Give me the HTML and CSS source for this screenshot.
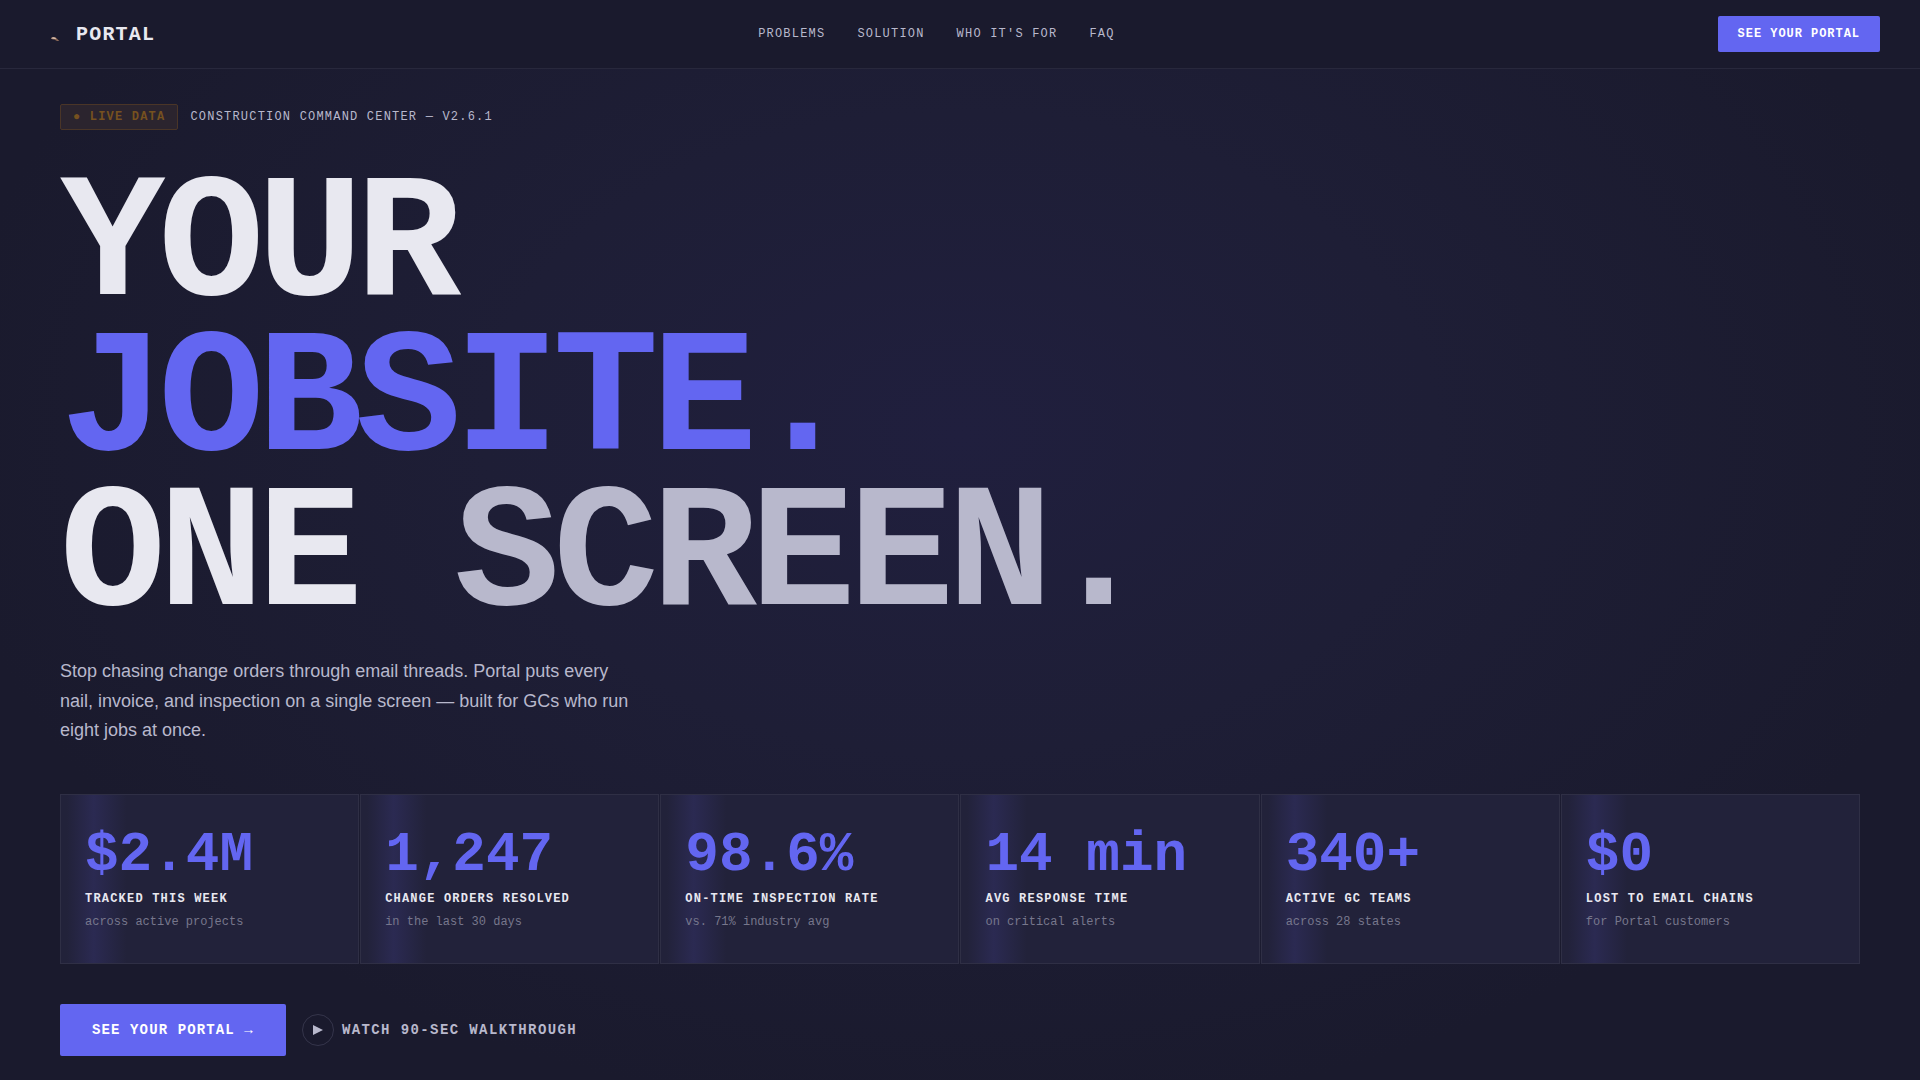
FILE: index.html
```html
<!DOCTYPE html>
<html lang="en">
<head>
<meta charset="utf-8">
<meta name="viewport" content="width=device-width, initial-scale=1">
<title>Portal — Construction Command Center</title>
<link rel="stylesheet" href="styles.css">
</head>
<body>
<header class="topbar">
  <a class="brand" href="#">
    <svg class="brand-mark" viewBox="0 0 28 28" aria-hidden="true">
      <path d="M10.800 18.600 Q11.500 16.900 13.500 16.900 Q16.200 16.900 17 18.800 L19.300 21 Q17.500 21.300 16 20.400 L14.500 19.500 Q12.500 19.900 10.800 18.600Z" fill="#8d6a58"/>
      <path d="M11.200 18.300 Q12 17.200 13.800 17.300 Q15.600 17.400 16.200 18.900 Q13.500 19.300 11.200 18.300Z" fill="#d9bfae"/>
    </svg>
    <span>PORTAL</span>
  </a>
  <nav class="nav" aria-label="Main">
    <a href="#problems">PROBLEMS</a>
    <a href="#solution">SOLUTION</a>
    <a href="#who">WHO IT'S FOR</a>
    <a href="#faq">FAQ</a>
  </nav>
  <button class="btn btn-small" type="button">SEE YOUR PORTAL</button>
</header>
<main class="hero">
  <div class="eyebrow">
    <span class="badge">● LIVE DATA</span>
    <span>CONSTRUCTION COMMAND CENTER — V2.6.1</span>
  </div>
  <h1 class="headline">YOUR<br><span class="accent">JOBSITE.</span><br>ONE <span class="muted">SCREEN.</span></h1>
  <p class="lede">Stop chasing change orders through email threads. Portal puts every nail, invoice, and inspection on a single screen — built for GCs who run eight jobs at once.</p>
  <ul class="stats">
    <li class="stat"><strong>$2.4M</strong><b>TRACKED THIS WEEK</b><small>across active projects</small></li>
    <li class="stat"><strong>1,247</strong><b>CHANGE ORDERS RESOLVED</b><small>in the last 30 days</small></li>
    <li class="stat"><strong>98.6%</strong><b>ON-TIME INSPECTION RATE</b><small>vs. 71% industry avg</small></li>
    <li class="stat"><strong>14 min</strong><b>AVG RESPONSE TIME</b><small>on critical alerts</small></li>
    <li class="stat"><strong>340+</strong><b>ACTIVE GC TEAMS</b><small>across 28 states</small></li>
    <li class="stat"><strong>$0</strong><b>LOST TO EMAIL CHAINS</b><small>for Portal customers</small></li>
  </ul>
  <div class="actions">
    <button class="btn btn-large" type="button">SEE YOUR PORTAL →</button>
    <button class="watch" type="button">
      <svg class="play" viewBox="0 0 32 32" aria-hidden="true"><circle cx="16" cy="16" r="15.500" fill="none" stroke="#35354b"/><path d="M11 11 L21 16 L11 21Z" fill="#b8b8cc"/></svg>
      <span>WATCH 90-SEC WALKTHROUGH</span>
    </button>
  </div>
</main>
</body>
</html>
```
FILE: styles.css
```css
* {
  box-sizing: border-box;
}

body {
  margin: 0;
  min-height: 100vh;
  background: #1a1a2e;
  color: #e8e8f0;
  font-family: "Liberation Mono", monospace;
}

a {
  color: inherit;
  text-decoration: none;
}

.topbar {
  display: flex;
  align-items: center;
  justify-content: space-between;
  padding: 16px 40px;
  border-bottom: 1px solid #28283c;
  background: #1a1a2d;
}

.brand {
  display: flex;
  align-items: center;
  gap: 8px;
  font-size: 20px;
  font-weight: 700;
  letter-spacing: 0.06em;
}

.brand-mark {
  width: 28px;
  height: 28px;
}

.nav {
  display: flex;
  gap: 32px;
  color: #b8b8cc;
  font-size: 12px;
  letter-spacing: 0.1em;
}

.btn {
  border: 0;
  border-radius: 2px;
  background: #6366f1;
  color: #fff;
  font-family: inherit;
  font-weight: 700;
}

.btn-small {
  padding: 0 20px;
  font-size: 12px;
  line-height: 36px;
  letter-spacing: 0.08em;
}

.btn-large {
  padding: 0 32px;
  font-size: 14px;
  line-height: 52px;
  letter-spacing: 0.08em;
}

.hero {
  padding: 35px 60px 24px;
  background: radial-gradient(ellipse at 50% 36%, #201f3e 0%, #1e1e36 35%, #1a1a2d 75%);
}

.eyebrow {
  display: flex;
  align-items: center;
  gap: 12px;
  margin-bottom: 40px;
  color: #b8b8cc;
  font-size: 12px;
  letter-spacing: 0.1em;
}

.badge {
  padding: 0 12px;
  border: 1px solid #4a3527;
  border-radius: 2px;
  background: #2b242e;
  color: #76511f;
  font-weight: 700;
  line-height: 24px;
}

.headline {
  margin: 0 0 22px;
  font-size: 176px;
  line-height: 155px;
  letter-spacing: -0.04em;
}

.accent {
  color: #6366f1;
}

.muted {
  color: #b8b8cc;
}

.lede {
  max-width: 580px;
  margin: 0 0 48px;
  color: #b8b8cc;
  font-family: "Liberation Sans", sans-serif;
  font-size: 18px;
  line-height: 1.65;
}

.stats {
  display: grid;
  grid-template-columns: repeat(6, 1fr);
  gap: 1px;
  margin: 0 0 40px;
  padding: 0;
  list-style: none;
}

.stat {
  display: flex;
  flex-direction: column;
  padding: 32px 24px;
  border: 1px solid #2f2f45;
  background: linear-gradient(90deg, #22223a 2%, #2b2a52 11%, #22223a 22%);
}

.stat strong {
  color: #6366f1;
  font-size: 56px;
  line-height: 56px;
}

.stat b {
  margin-top: 6px;
  font-size: 12px;
  line-height: 20px;
  letter-spacing: 0.1em;
}

.stat small {
  margin-top: 4px;
  color: #77778c;
  font-size: 12px;
  line-height: 18px;
}

.actions {
  display: flex;
  align-items: center;
  gap: 16px;
}

.watch {
  display: flex;
  align-items: center;
  gap: 8px;
  padding: 0;
  border: 0;
  background: none;
  color: #b8b8cc;
  font-family: inherit;
  font-size: 14px;
  font-weight: 700;
  letter-spacing: 0.1em;
}

.play {
  width: 32px;
  height: 32px;
}
```
